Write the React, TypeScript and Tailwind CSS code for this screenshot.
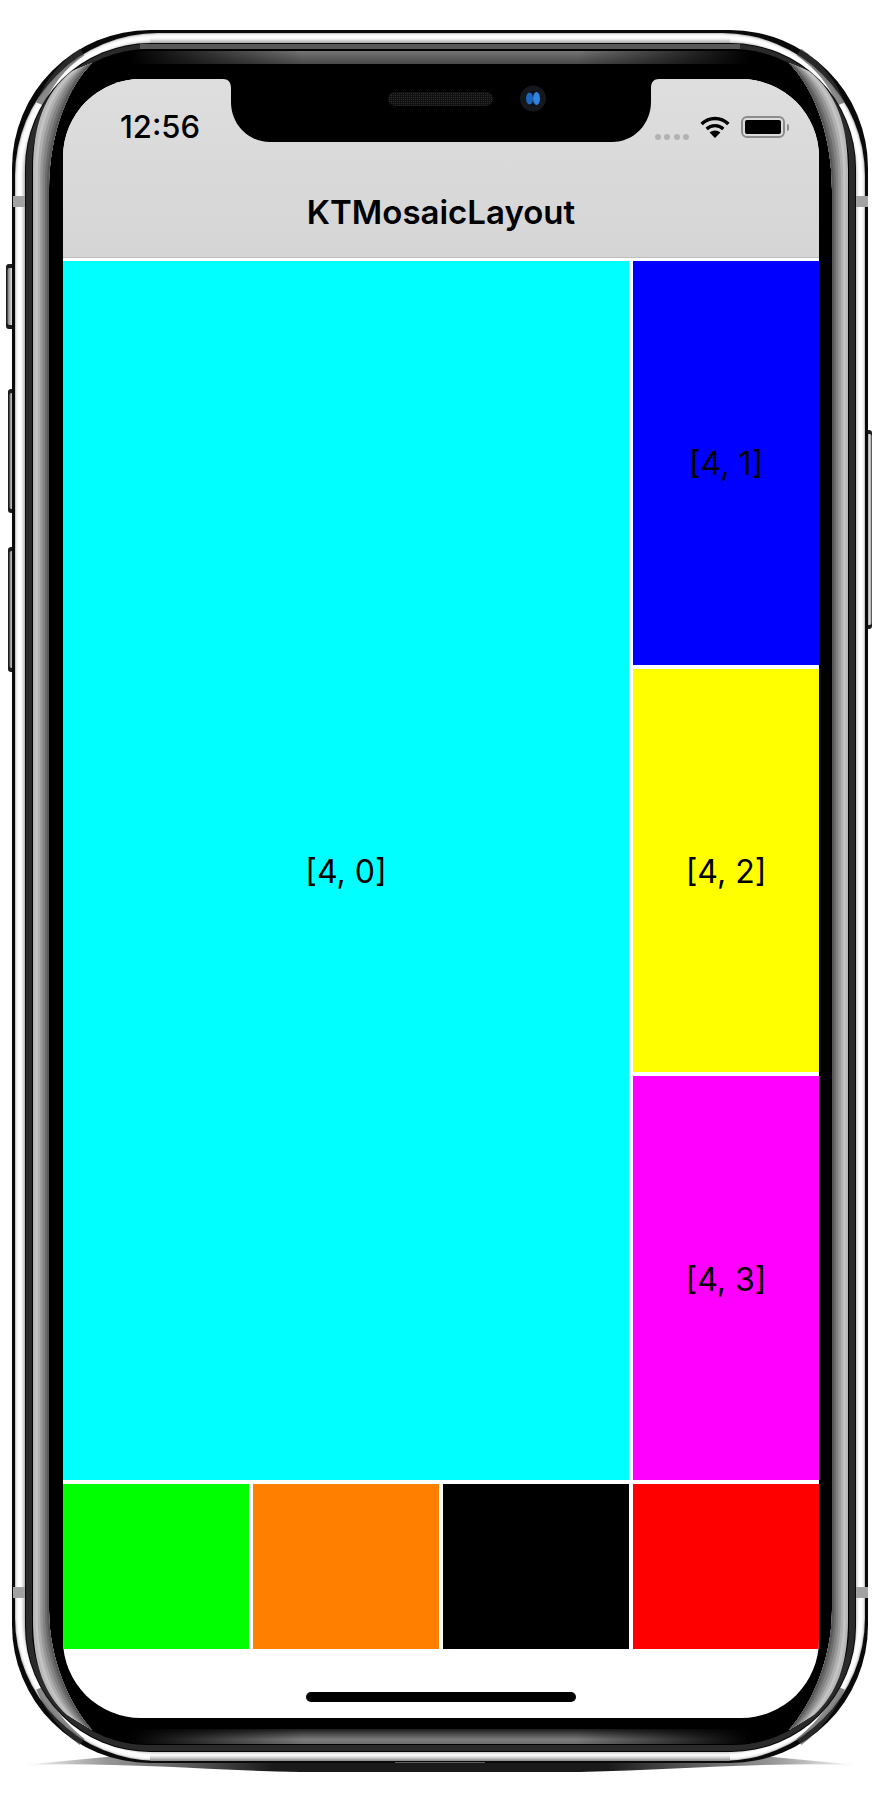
const ink = '"Inter", "Liberation Sans", sans-serif';

const whiteRing = ['#c8c8c8', '#ececec', '#f8f8f8', '#ffffff', '#ffffff', '#ffffff', '#f6f6f6', '#e6e6e6', '#d4d4d4', '#bcbcbc'];

const lerp = (a: number, b: number, t: number) => (a + (b - a) * t).toFixed(1);

// crescent on the left of the bezel, t moves its outer edge towards the inner one
function bandPath(t: number) {
  const o = [33, 170, 33, 125, 45, 92, 72, 71, 33, 1620, 33, 1665, 45, 1695, 67, 1715];
  const i = [49, 190, 49, 130, 70, 85, 92, 63, 49, 1610, 49, 1660, 70, 1705, 92, 1730];
  const p = o.map((v, n) => lerp(v, i[n], t));
  return `M${p[0]} ${p[1]} C${p[2]} ${p[3]} ${p[4]} ${p[5]} ${p[6]} ${p[7]} L92 63 C70 85 49 130 49 190 L49 1610 C49 1660 70 1705 92 1730 L${p[14]} ${p[15]} C${p[12]} ${p[13]} ${p[10]} ${p[11]} ${p[8]} ${p[9]} Z`;
}

const bandSteps = [
  { t: 0, c: '#b8b8b8' },
  { t: 0.15, c: '#c4c4c4' },
  { t: 0.3, c: '#b0b0b0' },
  { t: 0.45, c: '#989898' },
  { t: 0.6, c: '#828282' },
  { t: 0.75, c: '#6c6c6c' },
  { t: 0.88, c: '#585858' },
];

function SideBand() {
  return (
    <g>
      {bandSteps.map((s) => (
        <path key={s.t} d={bandPath(s.t)} fill={s.c} />
      ))}
    </g>
  );
}

function SideButton({ x, y, w, h }: { x: number; y: number; w: number; h: number }) {
  return (
    <g>
      <rect x={x} y={y} width={w} height={h} rx="3" fill="#1c1c1c" />
      <rect x={x + 1.5} y={y + 4} width={w - 2} height={h - 8} rx="2" fill="url(#buttonFill)" />
    </g>
  );
}

function PhoneFrame() {
  return (
    <svg className="absolute inset-0" width="880" height="1800" viewBox="0 0 880 1800" fill="none">
      <defs>
        <linearGradient id="buttonFill" x1="0" x2="1" y1="0" y2="0">
          <stop offset="0" stopColor="#777" />
          <stop offset="0.6" stopColor="#d8d8d8" />
          <stop offset="1" stopColor="#999" />
        </linearGradient>
        <linearGradient id="topBand" x1="0" x2="0" y1="0" y2="1">
          <stop offset="0" stopColor="#747474" />
          <stop offset="1" stopColor="#484848" />
        </linearGradient>
        <linearGradient id="bottomBand" x1="0" x2="0" y1="0" y2="1">
          <stop offset="0" stopColor="#1c1c1c" />
          <stop offset="0.7" stopColor="#7c7c7c" />
          <stop offset="1" stopColor="#6c6c6c" />
        </linearGradient>
        <linearGradient id="fadeH" x1="130" x2="750" y1="0" y2="0" gradientUnits="userSpaceOnUse">
          <stop offset="0" stopColor="#000" />
          <stop offset="0.28" stopColor="#000" stopOpacity="0" />
          <stop offset="0.72" stopColor="#000" stopOpacity="0" />
          <stop offset="1" stopColor="#000" />
        </linearGradient>
        <linearGradient id="floorShadow" x1="22" x2="858" y1="0" y2="0" gradientUnits="userSpaceOnUse">
          <stop offset="0" stopColor="#1a1a1a" stopOpacity="0" />
          <stop offset="0.1" stopColor="#1a1a1a" stopOpacity="0.45" />
          <stop offset="0.3" stopColor="#1a1a1a" />
          <stop offset="0.7" stopColor="#1a1a1a" />
          <stop offset="0.9" stopColor="#1a1a1a" stopOpacity="0.45" />
          <stop offset="1" stopColor="#1a1a1a" stopOpacity="0" />
        </linearGradient>
        <linearGradient id="rimTop" x1="0" x2="0" y1="0" y2="1">
          <stop offset="0" stopColor="#fff" stopOpacity="0" />
          <stop offset="1" stopColor="#a8a8a8" />
        </linearGradient>
        <linearGradient id="rimBottom" x1="0" x2="0" y1="0" y2="1">
          <stop offset="0" stopColor="#a0a0a0" stopOpacity="0" />
          <stop offset="1" stopColor="#8c8c8c" />
        </linearGradient>
      </defs>

      <path d="M22 1765 C120 1762 200 1770 300 1772 L580 1772 C680 1770 760 1762 858 1765 L700 1750 L180 1750 Z" fill="url(#floorShadow)" />

      <SideButton x={6} y={264} w={9} h={65} />
      <SideButton x={8} y={389} w={7} h={124} />
      <SideButton x={8} y={547} w={7} h={125} />
      <SideButton x={865} y={430} w={7} h={199} />

      <rect x="12" y="30" width="856" height="1733" rx="138" fill="#0a0a0a" />
      {whiteRing.map((c, n) => (
        <rect key={n} x={15 + n} y={33 + n} width={850 - n * 2} height={1728 - n * 2} rx={143 - n} fill={c} />
      ))}
      <rect x="150" y="36" width="580" height="7" fill="url(#rimTop)" />
      <rect x="150" y="1755" width="580" height="6" fill="url(#rimBottom)" />
      <g stroke="#3c3c3c" strokeOpacity="0.6" strokeWidth="8">
        <path d="M40 104 C48 84 62 66 82 52" />
        <path d="M40 1688 C48 1708 62 1726 82 1742" />
        <path d="M841 104 C833 84 819 66 799 52" />
        <path d="M841 1688 C833 1708 819 1726 799 1742" />
      </g>

      <rect x="25" y="43" width="831" height="1709" rx="125" fill="#080808" />
      <rect x="26" y="44" width="829" height="1707" rx="124" fill="#2a2a2a" />
      <rect x="140" y="44" width="600" height="5" fill="#585858" />
      <rect x="32" y="49" width="817" height="1696" rx="116" fill="#000" />

      <rect x="130" y="51" width="620" height="13" fill="url(#topBand)" />
      <rect x="130" y="1729" width="620" height="15" fill="url(#bottomBand)" />
      <rect x="130" y="51" width="620" height="13" fill="url(#fadeH)" />
      <rect x="130" y="1729" width="620" height="15" fill="url(#fadeH)" />

      <SideBand />
      <g transform="translate(881 0) scale(-1 1)">
        <SideBand />
      </g>

      <rect x="13" y="196" width="12" height="11" fill="#a2a2a2" />
      <rect x="856" y="196" width="12" height="11" fill="#a2a2a2" />
      <rect x="13" y="1587" width="12" height="11" fill="#a2a2a2" />
      <rect x="856" y="1587" width="12" height="11" fill="#a2a2a2" />

      <rect x="395" y="1762" width="90" height="1" fill="#5c5c5c" />
    </svg>
  );
}

function Notch() {
  return (
    <svg className="absolute left-[160px] top-0" width="436" height="63" viewBox="0 0 436 63" fill="none">
      <defs>
        <pattern id="mesh" width="2" height="2" patternUnits="userSpaceOnUse">
          <rect width="2" height="2" fill="#111" />
          <rect width="1" height="1" fill="#2c2c2c" />
        </pattern>
      </defs>
      <path d="M0 0 C5 0 8 3 8 9 L8 23 C8 45 25 63 47 63 L389 63 C411 63 428 45 428 23 L428 9 C428 3 431 0 436 0 Z" fill="#000" />
      <rect x="165" y="13" width="105" height="14" rx="7" fill="url(#mesh)" />
      <circle cx="310" cy="19.5" r="13" fill="#14171b" />
      <circle cx="310" cy="19.5" r="7.5" fill="#06121f" />
      <ellipse cx="306.5" cy="19.5" rx="3.5" ry="6" fill="#1d66c0" />
      <ellipse cx="313.5" cy="19.5" rx="3.5" ry="6.5" fill="#2f86e0" />
    </svg>
  );
}

function StatusIcons() {
  return (
    <div className="flex items-center">
      <div className="flex gap-[3.3px] mt-[20px] mr-[11px]">
        <span className="w-[6px] h-[6px] rounded-full bg-[#b2b2b2]" />
        <span className="w-[6px] h-[6px] rounded-full bg-[#b2b2b2]" />
        <span className="w-[6px] h-[6px] rounded-full bg-[#b2b2b2]" />
        <span className="w-[6px] h-[6px] rounded-full bg-[#b2b2b2]" />
      </div>
      <svg width="30" height="22" viewBox="0 0 30 22" fill="none" className="mr-[11px]">
        <path d="M1.6 8 A19 19 0 0 1 28.4 8" stroke="#000" strokeWidth="3.4" />
        <path d="M6.7 13 A12 12 0 0 1 23.3 13" stroke="#000" strokeWidth="3.2" />
        <path d="M15 22 L9.6 16.6 A7.8 7.8 0 0 1 20.4 16.6 Z" fill="#000" />
      </svg>
      <div className="w-[44px] h-[22px] rounded-[6px] border-2 border-[#8c8c8c] p-[2px]">
        <div className="w-full h-full rounded-[2px] bg-black" />
      </div>
      <div className="w-[2px] h-[7px] ml-[2px] rounded-r-full bg-[#8c8c8c]" />
    </div>
  );
}

function Cell({ className, label }: { className: string; label?: string }) {
  return (
    <div className={`flex items-center justify-center pt-[3px] text-[32px] text-black ${className}`}>
      {label}
    </div>
  );
}

export default function App() {
  return (
    <div className="relative w-[880px] h-[1800px] bg-white overflow-hidden pt-[79px] pl-[63px]" style={{ fontFamily: ink }}>
      <PhoneFrame />
      <div className="relative w-[756px] h-[1639px] rounded-[78px] overflow-hidden bg-white flex flex-col">
        <div className="h-[179px] flex-none border-b border-[#bdbdbd] bg-gradient-to-b from-[#dedede] to-[#d5d5d5] text-black">
          <div className="flex justify-between items-center pt-[35px] pl-[57px] pr-[30px]">
            <span className="text-[31px] leading-[22px] font-medium">12:56</span>
            <StatusIcons />
          </div>
          <div className="mt-[52px] text-center text-[33px] leading-[40px] font-[560]">KTMosaicLayout</div>
        </div>
        <div className="mt-[3px] h-[1388px] grid grid-cols-4 grid-rows-[repeat(3,1fr)_165px] gap-1">
          <Cell className="col-span-3 row-span-3 bg-[#00ffff]" label="[4, 0]" />
          <Cell className="bg-[#0000ff]" label="[4, 1]" />
          <Cell className="bg-[#ffff00]" label="[4, 2]" />
          <Cell className="bg-[#ff00ff]" label="[4, 3]" />
          <Cell className="bg-[#00ff00]" />
          <Cell className="bg-[#ff8000]" />
          <Cell className="bg-black" />
          <Cell className="bg-[#ff0000]" />
        </div>
        <div className="mt-[43px] mx-auto w-[270px] h-[10px] rounded-full bg-black" />
        <Notch />
      </div>
    </div>
  );
}
